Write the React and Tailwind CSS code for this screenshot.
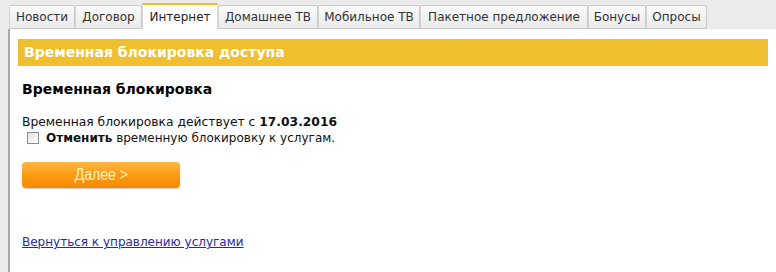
import React from 'react';

const tabs = [
  { name: 'Новости', w: 'w-[66px]' },
  { name: 'Договор', w: 'w-[67px]' },
  { name: 'Интернет', w: 'w-[76px]', active: true },
  { name: 'Домашнее ТВ', w: 'w-[100px]' },
  { name: 'Мобильное ТВ', w: 'w-[102px]' },
  { name: 'Пакетное предложение', w: 'w-[168px]' },
  { name: 'Бонусы', w: 'w-[58px]' },
  { name: 'Опросы', w: 'w-[61px]' },
];

const App = () => {
  return (
    <div
      className="w-[776px] h-[272px] bg-[#ececec] overflow-hidden text-[12.3px] text-[#111]"
      style={{ fontFamily: 'Verdana, "DejaVu Sans", sans-serif' }}
    >
      <div className="flex h-[29px] pl-[9px] pt-[5px] text-[12px]">
        {tabs.map((tab) =>
          tab.active ? (
            <div
              key={tab.name}
              className={`${tab.w} -mt-[2px] h-[26px] bg-white border-t-2 border-t-[#f0bf30] border-x border-x-[#d8d8d8] flex items-center justify-center text-[#222]`}
            >
              {tab.name}
            </div>
          ) : (
            <div
              key={tab.name}
              className={`${tab.w} h-[24px] bg-gradient-to-b from-[#fafafa] to-[#ebebeb] border border-[#c9c9c9] border-l-[#d6d6d6] rounded-t-[2px] flex items-center justify-center text-[#333]`}
            >
              {tab.name}
            </div>
          )
        )}
      </div>
      <div className="ml-[8px] h-[243px] bg-white border-l-2 border-l-[#a8a8a8] pl-[8px] pr-[8px] pt-[10px]">
        <div className="h-[27px] bg-[#f0bf30] flex items-center pl-[6px] text-white font-bold text-[14px]">
          Временная блокировка доступа
        </div>
        <div className="mt-[13px] pl-[4px] font-bold text-[14px] text-black">Временная блокировка</div>
        <div className="mt-[13px] pl-[4px]">
          Временная блокировка действует с <b>17.03.2016</b>
        </div>
        <label className="flex items-center gap-[7px] pl-[9px] -mt-[2px] text-[12px]">
          <span className="w-[12px] h-[12px] border border-[#8c8c8c] bg-gradient-to-br from-[#e2e2e2] to-white inline-block" />
          <span>
            <b>Отменить</b> временную блокировку к услугам.
          </span>
        </label>
        <button
          className="mt-[15px] ml-[4px] w-[158px] h-[26px] rounded-[4px] bg-gradient-to-b from-[#ffb640] via-[#fc9a0f] to-[#f58a05] text-[#fff3c8] text-[16px] shadow-[0_1px_1px_rgba(0,0,0,0.2)]"
          style={{ fontFamily: '"Liberation Sans Narrow", "Liberation Sans", Arial, sans-serif' }}
        >
          <span className="inline-block scale-x-[0.88]">Далее &gt;</span>
        </button>
        <div className="mt-[45px] pl-[4px] text-[12px]">
          <a href="#" className="text-[#2a2a9a] underline">
            Вернуться к управлению услугами
          </a>
        </div>
      </div>
    </div>
  );
};

export default App;
